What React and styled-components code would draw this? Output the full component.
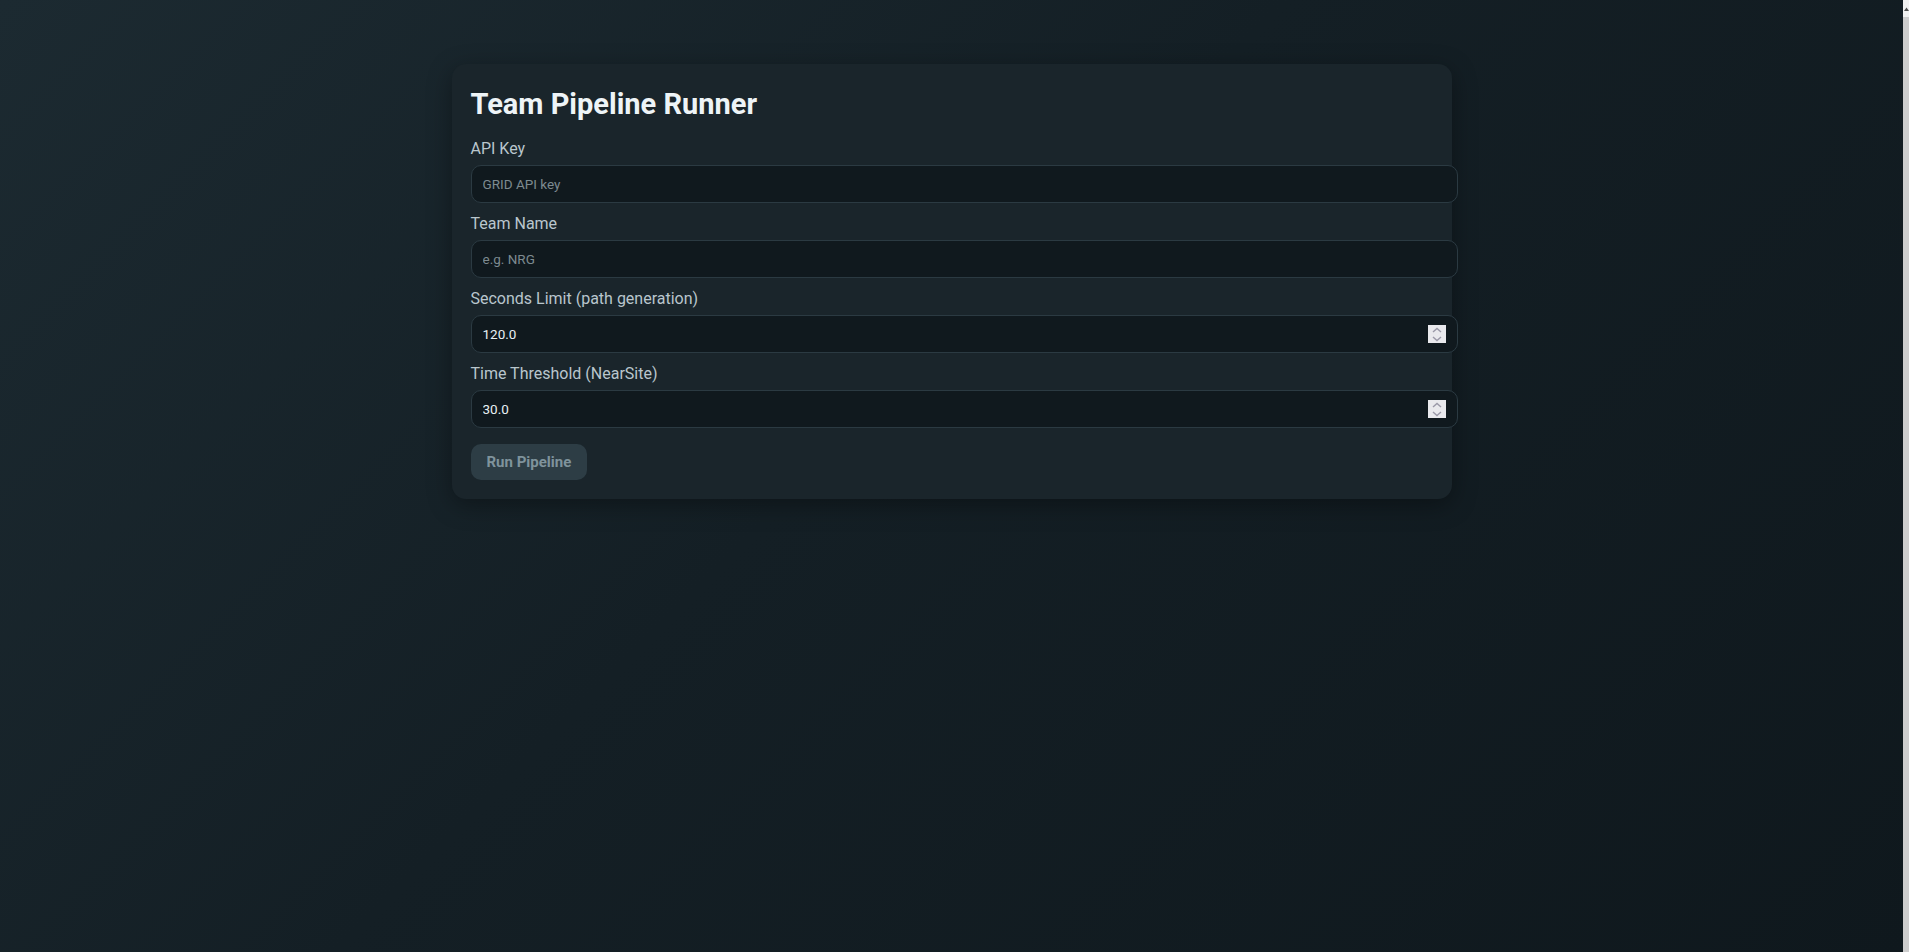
import React, { useState } from "react";
import styled, { createGlobalStyle } from "styled-components";

const GlobalStyle = createGlobalStyle`
  html, body {
    margin: 0;
  }
  body {
    background: linear-gradient(135deg, #1c2a31 0%, #141f25 45%, #0f181d 100%);
    background-attachment: fixed;
    font-family: Roboto, "Noto Sans", sans-serif;
    color: #c9d4da;
  }
`;

const Shell = styled.div`
  display: flex;
  min-height: 100vh;
`;

const Page = styled.main`
  flex: 1;
  padding-top: 64px;
  display: flex;
  justify-content: center;
  align-items: flex-start;
`;

/* browser scrollbar strip visible at the right edge of the capture */
const ScrollStrip = styled.div`
  width: 6px;
  background: #cdcdcd;
  display: flex;
  flex-direction: column;
`;

const ScrollButton = styled.div`
  height: 17px;
  background: #f1f1f1;
  display: flex;
  align-items: center;
  padding-left: 1px;
`;

const Card = styled.form`
  width: 1000px;
  box-sizing: border-box;
  padding: 21px 18px 19px 19px;
  background: #1a252b;
  border-radius: 14px;
  box-shadow: 0 6px 24px rgba(0, 0, 0, 0.35);
`;

const Title = styled.h1`
  margin: 0 0 16px;
  font-size: 29px;
  font-weight: 700;
  color: #eef4f7;
  line-height: 38px;
`;

const Field = styled.div`
  display: flex;
  flex-direction: column;
  margin-bottom: 11px;
`;

const Label = styled.label`
  font-size: 16px;
  line-height: 20px;
  color: #b9c6cd;
  margin-bottom: 6px;
`;

const InputWrap = styled.div`
  position: relative;
`;

const Input = styled.input`
  display: block;
  width: 100%;
  box-sizing: content-box;
  padding: 9px 11px;
  line-height: 18px;
  height: 18px;
  font-family: Roboto, "Noto Sans", sans-serif;
  font-size: 13.5px;
  color: #e8f0f4;
  background: #10191e;
  border: 1px solid #2b3a42;
  border-radius: 10px;
  outline: none;
  -moz-appearance: textfield;

  &::placeholder {
    color: #7d8a90;
  }

  &::-webkit-inner-spin-button,
  &::-webkit-outer-spin-button {
    -webkit-appearance: none;
    margin: 0;
  }
`;

const Spinner = styled.div`
  position: absolute;
  right: -12px;
  top: 50%;
  transform: translateY(-50%);
  width: 18px;
  height: 18px;
  background: #e9e9ed;
  display: flex;
  flex-direction: column;
  cursor: default;
`;

const SpinHalf = styled.button`
  flex: 1;
  padding: 0;
  border: none;
  background: transparent;
  display: flex;
  align-items: center;
  justify-content: center;
  cursor: default;
`;

const RunButton = styled.button`
  margin-top: 5px;
  padding: 9px 16px;
  line-height: 18px;
  font-family: Roboto, "Noto Sans", sans-serif;
  font-size: 15px;
  font-weight: 700;
  color: #7f939c;
  background: #2d3d45;
  border: none;
  border-radius: 10px;
  cursor: not-allowed;
`;

function Chevron({ up }) {
  return (
    <svg width="10" height="6" viewBox="0 0 10 6">
      <path
        d={up ? "M1 5 L5 1.5 L9 5" : "M1 1 L5 4.5 L9 1"}
        fill="none"
        stroke="#9b99a8"
        strokeWidth="1.4"
      />
    </svg>
  );
}

function NumberField({ id, label, value, onChange }) {
  const bump = (d) => {
    const n = parseFloat(value) || 0;
    onChange((n + d).toFixed(1));
  };
  return (
    <Field>
      <Label htmlFor={id}>{label}</Label>
      <InputWrap>
        <Input
          id={id}
          type="number"
          step="0.1"
          value={value}
          onChange={(e) => onChange(e.target.value)}
        />
        <Spinner>
          <SpinHalf type="button" aria-label="increment" onClick={() => bump(0.1)}>
            <Chevron up />
          </SpinHalf>
          <SpinHalf type="button" aria-label="decrement" onClick={() => bump(-0.1)}>
            <Chevron />
          </SpinHalf>
        </Spinner>
      </InputWrap>
    </Field>
  );
}

export default function App() {
  const [apiKey, setApiKey] = useState("");
  const [team, setTeam] = useState("");
  const [seconds, setSeconds] = useState("120.0");
  const [threshold, setThreshold] = useState("30.0");

  const ready = apiKey && team;

  return (
    <>
      <GlobalStyle />
      <Shell>
        <Page>
          <Card onSubmit={(e) => e.preventDefault()}>
            <Title>Team Pipeline Runner</Title>
            <Field>
              <Label htmlFor="api-key">API Key</Label>
              <Input
                id="api-key"
                type="password"
                placeholder="GRID API key"
                value={apiKey}
                onChange={(e) => setApiKey(e.target.value)}
              />
            </Field>
            <Field>
              <Label htmlFor="team">Team Name</Label>
              <Input
                id="team"
                placeholder="e.g. NRG"
                value={team}
                onChange={(e) => setTeam(e.target.value)}
              />
            </Field>
            <NumberField
              id="seconds"
              label="Seconds Limit (path generation)"
              value={seconds}
              onChange={setSeconds}
            />
            <NumberField
              id="threshold"
              label="Time Threshold (NearSite)"
              value={threshold}
              onChange={setThreshold}
            />
            <RunButton type="submit" disabled={!ready}>
              Run Pipeline
            </RunButton>
          </Card>
        </Page>
        <ScrollStrip>
          <ScrollButton>
            <svg width="5" height="4" viewBox="0 0 5 4">
              <path d="M0 4 L2.5 0.5 L5 4 Z" fill="#505050" />
            </svg>
          </ScrollButton>
        </ScrollStrip>
      </Shell>
    </>
  );
}
